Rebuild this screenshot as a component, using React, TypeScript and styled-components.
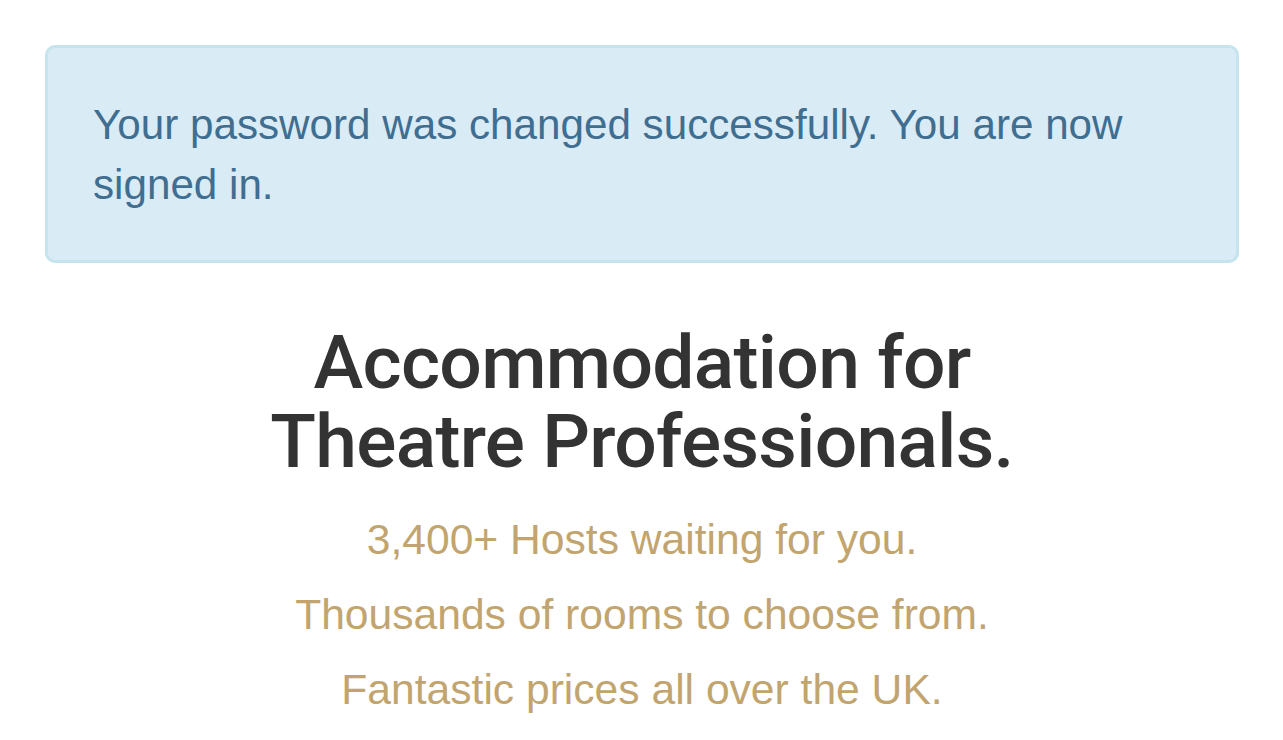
import React from "react";
import styled, { createGlobalStyle } from "styled-components";

const GlobalStyle = createGlobalStyle`
  html, body {
    margin: 0;
    padding: 0;
    background: #ffffff;
  }
  body {
    font-family: "Liberation Sans", Arial, sans-serif;
  }
`;

const Page = styled.div`
  padding: 45px 44px 0 45px;
`;

const Alert = styled.div`
  background: #d9ebf5;
  border: 3px solid #c4e4ee;
  border-radius: 10px;
  padding: 47px 45px 45px;
  color: #3f6e91;
  font-size: 42.2px;
  line-height: 60px;
`;

const Hero = styled.section`
  text-align: center;
  padding-top: 60px;
`;

const Title = styled.h1`
  margin: 0 auto;
  font-family: Roboto, "Liberation Sans", Arial, sans-serif;
  font-size: 75px;
  line-height: 79px;
  font-weight: 500;
  letter-spacing: -0.7px;
  color: #333333;
`;

const Tagline = styled.p`
  margin: 0;
  color: #c2a56e;
  font-size: 42.6px;
  line-height: 75px;
`;

const Taglines = styled.div`
  padding-top: 21px;
`;

const lines = [
  "3,400+ Hosts waiting for you.",
  "Thousands of rooms to choose from.",
  "Fantastic prices all over the UK.",
];

export default function App() {
  return (
    <>
      <GlobalStyle />
      <Page>
        <Alert>
          Your password was changed successfully. You are now signed in.
        </Alert>
        <Hero>
          <Title>
            Accommodation for
            <br />
            Theatre Professionals.
          </Title>
          <Taglines>
            {lines.map((line) => (
              <Tagline key={line}>{line}</Tagline>
            ))}
          </Taglines>
        </Hero>
      </Page>
    </>
  );
}
